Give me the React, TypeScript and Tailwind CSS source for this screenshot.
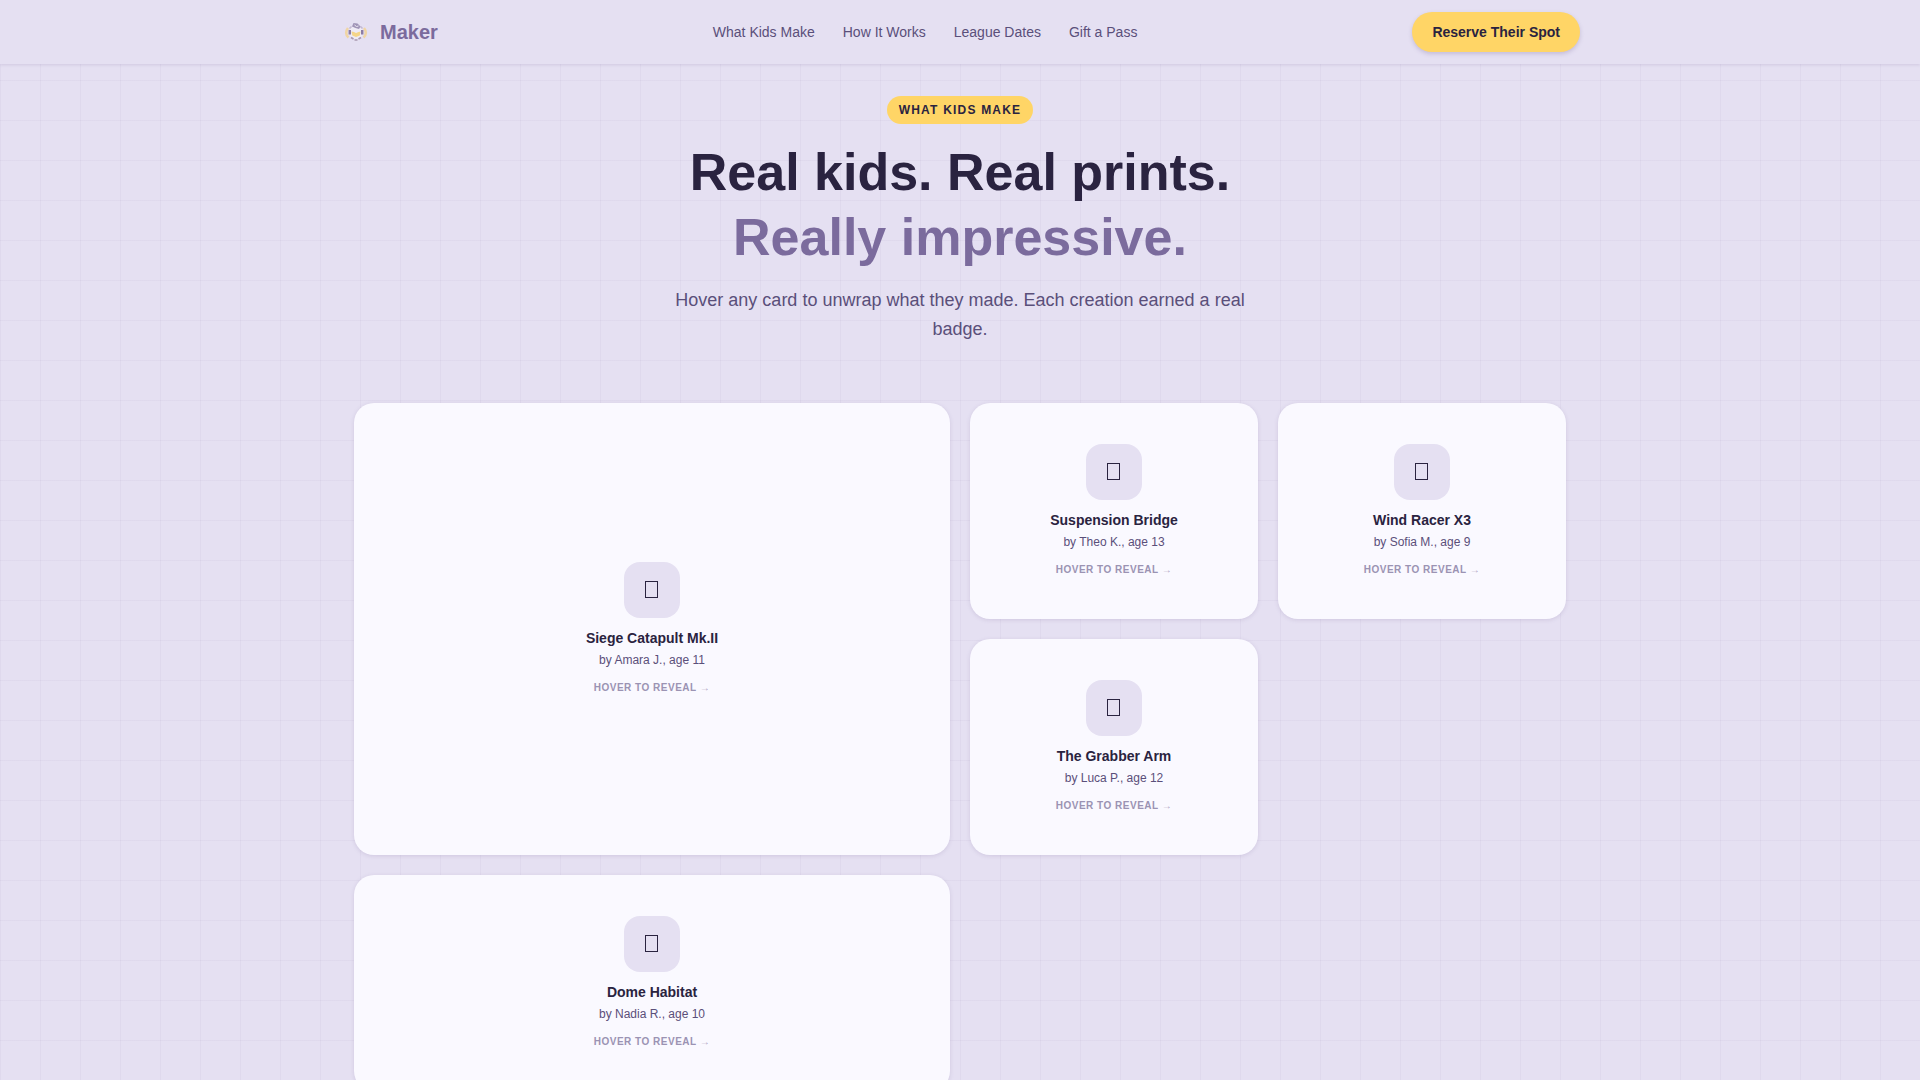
import React from "react";

const links = ["What Kids Make", "How It Works", "League Dates", "Gift a Pass"];

const cards = [
  { title: "Siege Catapult Mk.II", by: "by Amara J., age 11", span: "col-span-2 row-span-2" },
  { title: "Suspension Bridge", by: "by Theo K., age 13", span: "" },
  { title: "Wind Racer X3", by: "by Sofia M., age 9", span: "" },
  { title: "The Grabber Arm", by: "by Luca P., age 12", span: "" },
  { title: "Dome Habitat", by: "by Nadia R., age 10", span: "col-span-2 col-start-1" },
];

function Logo() {
  return (
    <svg width="32" height="32" viewBox="0 0 32 32" className="block">
      <path d="M8 12C5.500 15 5.500 19 8.500 21.500" fill="none" stroke="#f0d5a4" strokeWidth="2.600" />
      <path d="M24 12C26.500 15 26.500 19 23.500 21.500" fill="none" stroke="#f0d5a4" strokeWidth="2.600" />
      <circle cx="16" cy="16.500" r="6.800" fill="#efebf5" />
      <path d="M9.500 12.500l2-2M22.500 12.500l-2-2" stroke="#c3b9d2" strokeWidth="1.600" />
      <path d="M9.800 14v4.500M22.200 14v4.500" stroke="#8b7ca5" strokeWidth="2.400" />
      <path d="M12 10.500l1.500-3.500 4 .5 3 3-1.500 2.500-3.500-1z" fill="#a094b7" />
      <path d="M14.500 9l2 1.500 2-.5" fill="none" stroke="#ece8f3" strokeWidth="1" />
      <path d="M11.500 15.500l2.500.5 2 1 2.500-1 2-.5-.7 4-3.800 1.500-3.700-1.500z" fill="#f5d588" />
      <path d="M11 21.500l2.500 1.500M18.500 23l2.500-1.500M14.500 24h3" fill="none" stroke="#a999b0" strokeWidth="1.700" />
    </svg>
  );
}

export default function App() {
  return (
    <div className="h-[1080px] overflow-hidden bg-[#e5e0f2] bg-[linear-gradient(#7b6b9d0f_1px,transparent_1px),linear-gradient(90deg,#7b6b9d0f_1px,transparent_1px)] bg-[size:40px_40px] font-['Liberation_Sans',Arial,sans-serif] text-[#2a2340]">
      <header className="h-16 bg-[#e5e0f2] shadow-[0_1px_3px_#7b6b9d33]">
        <div className="mx-auto flex h-16 w-[1240px] items-center justify-between">
          <div className="flex items-center gap-2">
            <Logo />
            <span className="text-xl font-bold text-[#7b6b9d]">Maker</span>
          </div>
          <nav className="flex gap-7 text-sm text-[#5a4f7a]">
            {links.map((l) => (
              <a key={l}>{l}</a>
            ))}
          </nav>
          <button className="h-10 rounded-full bg-[#ffd566] px-5 text-sm font-bold shadow-[0_2px_4px_#7b6b9d4d]">
            Reserve Their Spot
          </button>
        </div>
      </header>
      <main className="mx-auto w-[1212px] pt-8">
        <div className="flex flex-col items-center text-center">
          <span className="flex h-7 items-center rounded-full bg-[#ffd566] px-3 text-xs font-bold tracking-[1.2px]">
            WHAT KIDS MAKE
          </span>
          <h1 className="mt-4 text-[52px] leading-[65px] font-bold">
            Real kids. Real prints.
            <br />
            <span className="text-[#7b6b9d]">Really impressive.</span>
          </h1>
          <p className="mt-4 w-[580px] text-lg leading-[29px] text-[#5a4f7a]">
            Hover any card to unwrap what they made. Each creation earned a real badge.
          </p>
        </div>
        <div className="mt-[59px] grid auto-rows-[216px] grid-cols-4 gap-5">
          {cards.map((c) => (
            <article
              key={c.title}
              className={`flex flex-col items-center justify-center rounded-[20px] bg-[#faf9ff] shadow-[0_1px_4px_#7b6b9d33] ${c.span}`}
            >
              <div className="flex size-14 items-center justify-center rounded-2xl bg-[#e5e0f2]">
                <span className="mr-px mb-px h-[17px] w-[13px] border border-[#2a2340]" />
              </div>
              <h3 className="mt-2.5 text-sm leading-[21px] font-bold">{c.title}</h3>
              <p className="mt-0.5 text-xs leading-[18px] text-[#5a4f7a]">{c.by}</p>
              <p className="mt-[11px] mb-px text-[10px] leading-[15px] font-bold tracking-[0.5px] text-[#9b93b3]">
                HOVER TO REVEAL <span className="opacity-80">→</span>
              </p>
            </article>
          ))}
        </div>
      </main>
    </div>
  );
}
